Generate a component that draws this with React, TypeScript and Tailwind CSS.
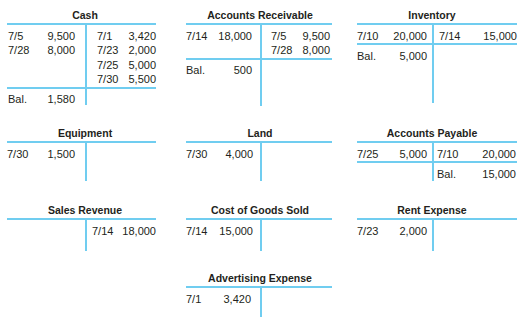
import React from 'react';

type Entry = [string, string];

type Section = {
  left: Entry[];
  right: Entry[];
  h?: string;
};

type Account = {
  title: string;
  w: string;
  lw: string;
  tw: string;
  lp: string;
  rp: string;
  sections: Section[];
};

const row1: Account[] = [
  {
    title: 'Cash',
    w: 'w-[149px]',
    lw: 'w-[80px]',
    tw: 'w-[156px]',
    lp: 'pl-[1px] pr-[10px]',
    rp: 'pl-[10px] pr-0',
    sections: [
      { left: [['7/5', '9,500'], ['7/28', '8,000']], right: [['7/1', '3,420'], ['7/23', '2,000'], ['7/25', '5,000'], ['7/30', '5,500']] },
      { left: [['Bal.', '1,580']], right: [], h: 'h-[16.5px]' },
    ],
  },
  {
    title: 'Accounts Receivable',
    w: 'w-[146px]',
    lw: 'w-[76px]',
    tw: 'w-[148px]',
    lp: 'pl-0 pr-[8px]',
    rp: 'pl-[9px] pr-[2px]',
    sections: [
      { left: [['7/14', '18,000']], right: [['7/5', '9,500'], ['7/28', '8,000']] },
      { left: [['Bal.', '500']], right: [], h: 'h-[46px]' },
    ],
  },
  {
    title: 'Inventory',
    w: 'w-[160px]',
    lw: 'w-[77px]',
    tw: 'w-[150px]',
    lp: 'pl-0 pr-[5px]',
    rp: 'pl-[5px] pr-0',
    sections: [
      { left: [['7/10', '20,000']], right: [['7/14', '15,000']] },
      { left: [['Bal.', '5,000']], right: [], h: 'h-[58px]' },
    ],
  },
];

const row2: Account[] = [
  {
    title: 'Equipment',
    w: 'w-[149px]',
    lw: 'w-[80px]',
    tw: 'w-[156px]',
    lp: 'pl-0 pr-[10px]',
    rp: 'pl-[10px] pr-0',
    sections: [{ left: [['7/30', '1,500']], right: [], h: 'h-[38px]' }],
  },
  {
    title: 'Land',
    w: 'w-[146px]',
    lw: 'w-[76px]',
    tw: 'w-[148px]',
    lp: 'pl-0 pr-[7px]',
    rp: 'pl-[9px] pr-0',
    sections: [{ left: [['7/30', '4,000']], right: [], h: 'h-[38px]' }],
  },
  {
    title: 'Accounts Payable',
    w: 'w-[160px]',
    lw: 'w-[77px]',
    tw: 'w-[150px]',
    lp: 'pl-0 pr-[5px]',
    rp: 'pl-[3px] pr-[1px]',
    sections: [
      { left: [['7/25', '5,000']], right: [['7/10', '20,000']] },
      { left: [], right: [['Bal.', '15,000']], h: 'h-[18px]' },
    ],
  },
];

const row3: Account[] = [
  {
    title: 'Sales Revenue',
    w: 'w-[149px]',
    lw: 'w-[80px]',
    tw: 'w-[156px]',
    lp: 'pl-0 pr-[10px]',
    rp: 'pl-[5px] pr-0',
    sections: [{ left: [], right: [['7/14', '18,000']], h: 'h-[31px]' }],
  },
  {
    title: 'Cost of Goods Sold',
    w: 'w-[146px]',
    lw: 'w-[76px]',
    tw: 'w-[148px]',
    lp: 'pl-0 pr-[7px]',
    rp: 'pl-[9px] pr-0',
    sections: [{ left: [['7/14', '15,000']], right: [], h: 'h-[31px]' }],
  },
  {
    title: 'Rent Expense',
    w: 'w-[160px]',
    lw: 'w-[77px]',
    tw: 'w-[150px]',
    lp: 'pl-0 pr-[5px]',
    rp: 'pl-[5px] pr-0',
    sections: [{ left: [['7/23', '2,000']], right: [], h: 'h-[31px]' }],
  },
];

const advertising: Account = {
  title: 'Advertising Expense',
  w: 'w-[146px]',
  lw: 'w-[76px]',
  tw: 'w-[148px]',
  lp: 'pl-0 pr-[9px]',
  rp: 'pl-[9px] pr-0',
  sections: [{ left: [['7/1', '3,420']], right: [], h: 'h-[29px]' }],
};

function Entries({ items, pad }: { items: Entry[]; pad: string }) {
  return (
    <div className={`pt-[3.5px] ${pad}`}>
      {items.map(([d, amt], i) => (
        <div key={i} className="flex justify-between leading-[14.5px]">
          <span>{d}</span>
          <span>{amt}</span>
        </div>
      ))}
    </div>
  );
}

function TAccount({ a }: { a: Account }) {
  return (
    <div className={a.w}>
      <div className={`${a.tw} h-[14px] whitespace-nowrap text-center text-[10.5px] font-bold leading-[14px]`}>
        {a.title}
      </div>
      <div className="mt-px border-t-2 border-[#70cdf0]">
        {a.sections.map((s, i) => (
          <div
            key={i}
            className={`flex ${s.h ?? ''} ${i < a.sections.length - 1 ? 'border-b-2 border-[#70cdf0]' : ''}`}
          >
            <div className={`${a.lw} shrink-0 border-r-2 border-[#70cdf0]`}>
              <Entries items={s.left} pad={a.lp} />
            </div>
            <div className="flex-1">
              <Entries items={s.right} pad={a.rp} />
            </div>
          </div>
        ))}
      </div>
    </div>
  );
}

function Row({ accounts, className }: { accounts: Account[]; className: string }) {
  return (
    <div className={`grid grid-cols-[179px_171px_160px] items-start ${className}`}>
      {accounts.map((a) => (
        <TAccount key={a.title} a={a} />
      ))}
    </div>
  );
}

export default function App() {
  return (
    <div className="h-[320px] w-[532px] overflow-hidden bg-white pl-[7px] pt-[8px] font-['Liberation_Sans',Arial,sans-serif] text-[11px] text-[#231f20]">
      <Row accounts={row1} className="" />
      <Row accounts={row2} className="mt-[20.5px]" />
      <Row accounts={row3} className="mt-[22px]" />
      <div className="mt-[20px] grid grid-cols-[179px_171px_160px] items-start">
        <div className="col-start-2">
          <TAccount a={advertising} />
        </div>
      </div>
    </div>
  );
}
